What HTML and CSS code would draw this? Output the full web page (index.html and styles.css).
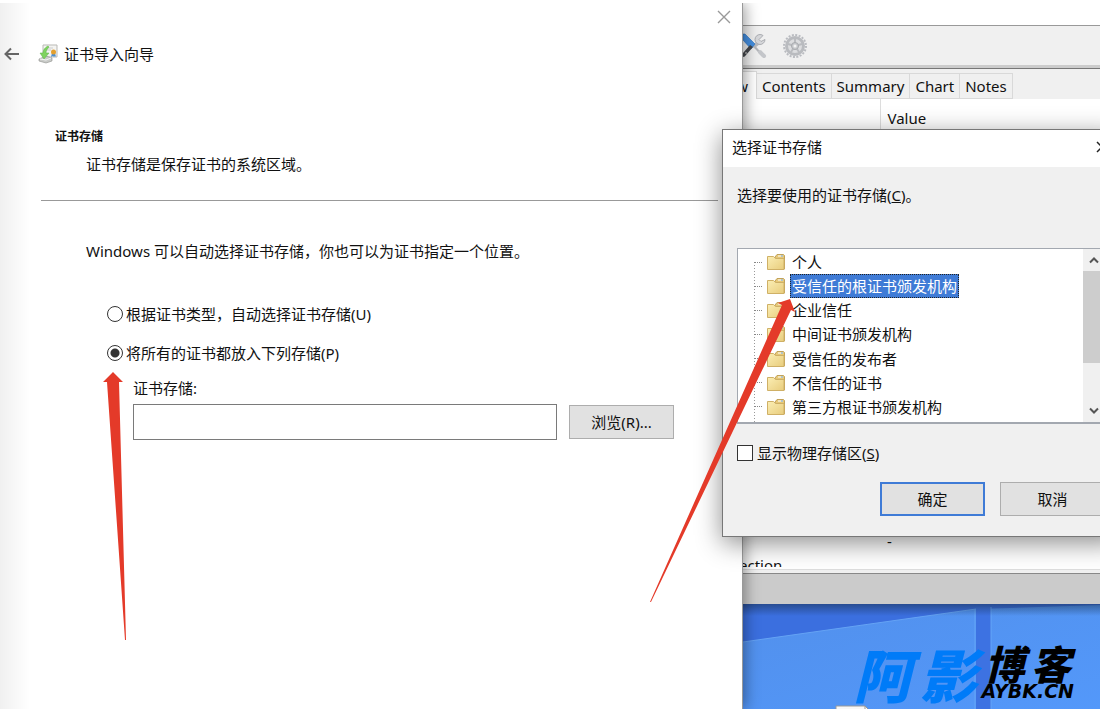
FILE: index.html
```
<!DOCTYPE html>
<html lang="zh-CN">
<head>
    <meta charset="UTF-8">
    <meta name="viewport" content="width=device-width, initial-scale=1.0">
    <title>证书导入向导</title>
    <link rel="stylesheet" href="styles.css">
</head>
<body>
    <main class="wizard">
        <button class="close" aria-label="关闭">
            <svg width="14" height="14" viewBox="0 0 14 14"><path d="M1 1l12 12M13 1L1 13" stroke="#999" stroke-width="1.4"/></svg>
        </button>
        <header class="wizard-title">
            <button class="back" aria-label="返回">
                <svg width="16" height="14" viewBox="0 0 16 14"><path d="M15 7H2M7 1.500L1.500 7L7 12.500" fill="none" stroke="#666" stroke-width="2"/></svg>
            </button>
            <svg width="20" height="20" viewBox="0 0 20 20">
                <path d="M5 1h14v12H5z" fill="#f4f4f2" stroke="#b9b9b5"/>
                <path d="M8 4h7M9 6h4" stroke="#ccc"/>
                <path d="M14 9l-1 4 2-1 1 1 1-1 1 1-1-4z" fill="#4b8ed0"/>
                <circle cx="15.500" cy="8" r="2.500" fill="#e4a02e"/>
                <path d="M1 15l7-3 6 2v3l-6 2-7-2z" fill="#c9cbc8" stroke="#8d8f8c" stroke-width=".6"/>
                <path d="M2 15l6 1 5-2" fill="none" stroke="#f5f5f5"/>
                <path d="M10 2C6 4 5 7 5 9L2 9l4 6 5-6H8c0-2 1-4 3-6z" fill="#7fd35f" stroke="#58b246" stroke-width=".5"/>
            </svg>
            <h1>证书导入向导</h1>
        </header>
        <section class="intro">
            <h2>证书存储</h2>
            <p>证书存储是保存证书的系统区域。</p>
        </section>
        <form class="options">
            <p>Windows 可以自动选择证书存储，你也可以为证书指定一个位置。</p>
            <label class="option"><input type="radio" name="store">根据证书类型，自动选择证书存储(U)</label>
            <label class="option"><input type="radio" name="store" checked>将所有的证书都放入下列存储(P)</label>
            <label class="store-label" for="store-name">证书存储:</label>
            <div class="store-row">
                <input type="text" id="store-name">
                <button type="button" class="btn">浏览(R)...</button>
            </div>
        </form>
    </main>

    <div class="desktop">
        <div class="app">
            <div class="app-title"></div>
            <div class="toolbar">
                <svg width="24" height="26" viewBox="0 0 24 26">
                    <path d="M10 12l10 11" stroke="#b4b6ba" stroke-width="2"/>
                    <path d="M17 19l4 4" stroke="#c4c6ca" stroke-width="4" stroke-linecap="round"/>
                    <path d="M10 14l5-4" stroke="#b9bbc0" stroke-width="4"/>
                    <path d="M20 2.500a5 5 0 1 0 2 4l-4 2-2-2z" fill="#d7d8db" stroke="#abadb2"/>
                    <path d="M0 1l2 0 10 10-4 5-8-9z" fill="#4590e2" stroke="#2c70bd" stroke-width=".6"/>
                    <path d="M10 14l-7 8q-1 2-3 2v-4l7-8z" fill="#45484d"/>
                    <circle cx="3" cy="20" r="1" fill="#aaa"/>
                </svg>
                <svg width="26" height="26" viewBox="0 0 26 26">
                    <circle cx="13" cy="13" r="11" fill="none" stroke="#b9bbc0" stroke-width="2" stroke-dasharray="2 1.450"/>
                    <circle cx="13" cy="13" r="8.500" fill="#dcdddf" stroke="#b9bbbf" stroke-width="3"/>
                    <path d="M13 13V6M13 13l7-2M13 13l4 6M13 13l-4 6M13 13l-7-2" stroke="#b9bbbf" stroke-width="2"/>
                    <circle cx="13" cy="13" r="3.500" fill="#c9cbce" stroke="#a7a9ad"/>
                    <circle cx="13" cy="13" r="1.500" fill="#f2f2f2"/>
                </svg>
            </div>
            <nav class="tabs">
                <button class="tab active">w</button>
                <button class="tab">Contents</button>
                <button class="tab">Summary</button>
                <button class="tab">Chart</button>
                <button class="tab">Notes</button>
            </nav>
            <div class="details">
                <table>
                    <thead><tr><th></th><th>Value</th></tr></thead>
                    <tbody>
                        <tr class="blank"><td></td><td></td></tr>
                        <tr><td></td><td>-</td></tr>
                        <tr><td>ection</td><td></td></tr>
                    </tbody>
                </table>
            </div>
            <div class="statusbar"></div>
        </div>
        <div class="wallpaper">
            <svg width="100%" height="100%" viewBox="0 0 357 105" preserveAspectRatio="xMinYMin slice">
                <defs>
                    <linearGradient id="sky" x1="0" y1="0" x2="1" y2="1">
                        <stop offset="0" stop-color="#5290ec"/>
                        <stop offset="1" stop-color="#5398fa"/>
                    </linearGradient>
                    <linearGradient id="shade" x1="0" y1="0" x2="0" y2="1">
                        <stop offset="0" stop-color="#123" stop-opacity=".45"/>
                        <stop offset="1" stop-color="#123" stop-opacity="0"/>
                    </linearGradient>
                </defs>
                <rect width="357" height="105" fill="url(#sky)"/>
                <path d="M0 0h357v1L233 5L0 38z" fill="#3b6fdf"/>
                <path d="M0 38L233 5" stroke="#65a3f4"/>
                <path d="M233 3h15v102h-15z" fill="#3d72e2"/>
                <path d="M232 5v100M248 3v102" stroke="#65a5f7"/>
                <rect width="357" height="12" fill="url(#shade)"/>
                <path d="M93 102h29l6 6H93z" fill="#f7f7f7" stroke="#999"/>
                <path d="M122 102v6" stroke="#999"/>
            </svg>
            <div class="logo">
                <div class="logo-main"><span>阿</span><span>影</span></div>
                <div class="logo-side">
                    <div class="logo-sub"><span>博</span><span>客</span></div>
                    <span class="logo-url">AYBK.CN</span>
                </div>
            </div>
        </div>
    </div>

    <div class="dialog" role="dialog" aria-labelledby="dialog-title">
        <header class="dialog-title">
            <h2 id="dialog-title">选择证书存储</h2>
            <button class="dialog-close" aria-label="关闭">
                <svg width="12" height="12" viewBox="0 0 12 12"><path d="M1 1l10 10M11 1L1 11" stroke="#222" stroke-width="1.500"/></svg>
            </button>
        </header>
        <div class="dialog-body">
            <p>选择要使用的证书存储(<u>C</u>)。</p>
            <div class="tree">
                <svg class="symbols" width="0" height="0">
                    <defs>
                        <linearGradient id="paper" x1="0" y1="0" x2="1" y2="1">
                            <stop offset="0" stop-color="#fbeeb4"/>
                            <stop offset="1" stop-color="#e8cc7c"/>
                        </linearGradient>
                    </defs>
                    <symbol id="folder" viewBox="0 0 18 16">
                        <path d="M8 3l2-2.500h6.500l1 1V15H8z" fill="#e6c878" stroke="#c2a258"/>
                        <path d="M11 2h5" stroke="#fff"/>
                        <path d="M14 2h2" stroke="#6fa5d8"/>
                        <path d="M.5 2.500h6l2 2h8.500v11H.5z" fill="url(#paper)" stroke="#cfb066"/>
                    </symbol>
                </svg>
                <ul>
                    <li><svg class="folder"><use href="#folder"/></svg><span>个人</span></li>
                    <li class="selected"><svg class="folder"><use href="#folder"/></svg><span>受信任的根证书颁发机构</span></li>
                    <li><svg class="folder"><use href="#folder"/></svg><span>企业信任</span></li>
                    <li><svg class="folder"><use href="#folder"/></svg><span>中间证书颁发机构</span></li>
                    <li><svg class="folder"><use href="#folder"/></svg><span>受信任的发布者</span></li>
                    <li><svg class="folder"><use href="#folder"/></svg><span>不信任的证书</span></li>
                    <li><svg class="folder"><use href="#folder"/></svg><span>第三方根证书颁发机构</span></li>
                </ul>
                <div class="scrollbar">
                    <button aria-label="向上"><svg width="10" height="8" viewBox="0 0 10 8"><path d="M1 6.500l4-4 4 4" fill="none" stroke="#555" stroke-width="2"/></svg></button>
                    <div class="thumb"></div>
                    <button aria-label="向下"><svg width="10" height="8" viewBox="0 0 10 8"><path d="M1 1.500l4 4 4-4" fill="none" stroke="#555" stroke-width="2"/></svg></button>
                </div>
            </div>
            <label class="physical"><input type="checkbox"><span>显示物理存储区(<u>S</u>)</span></label>
            <div class="actions">
                <button class="btn primary">确定</button>
                <button class="btn">取消</button>
            </div>
        </div>
    </div>

    <svg class="arrow arrow-left" width="30" height="270" viewBox="0 0 30 270">
        <path d="M12 0L22 10L18 10L25 268L24 268L6 10L2 10z" fill="#e43a29"/>
    </svg>
    <svg class="arrow arrow-right" width="150" height="304" viewBox="0 0 150 304">
        <path d="M140 0L145 13L141 11L1 303L0 303L132 6L128 4z" fill="#e43a29"/>
    </svg>
</body>
</html>
```
FILE: styles.css
```
* {
    box-sizing: border-box;
}

body {
    margin: 0;
    padding-top: 3px;
    height: 100vh;
    display: grid;
    grid-template-columns: minmax(0, 1fr) 357px;
    position: relative;
    overflow: hidden;
    background: #fff;
    color: #111;
    font-family: "Noto Sans", "Noto Sans CJK SC", sans-serif;
    font-size: 15px;
    line-height: 24px;
}

h1, h2, p, ul {
    margin: 0;
    padding: 0;
    font-size: 15px;
    font-weight: normal;
}

button, input {
    font: inherit;
    color: inherit;
    margin: 0;
}

button {
    padding: 0;
    border: none;
    background: none;
}

svg {
    display: block;
    flex: none;
}

.btn {
    width: 105px;
    height: 34px;
    background: #e1e1e1;
    border: 1px solid #adadad;
}

.btn.primary {
    border: 2px solid #3f7bd6;
}

/* wizard window */
.wizard {
    position: relative;
    z-index: 1;
    background: linear-gradient(to right, #f0f0f0, #fff 30px);
    border-right: 1px solid #999;
    box-shadow: 2px 0 14px rgba(0, 0, 0, 0.4);
    clip-path: inset(0 -20px 0 0);
    display: flex;
    flex-direction: column;
}

.close {
    align-self: flex-end;
    margin: 7px 11px 0 0;
}

.wizard-title {
    display: flex;
    align-items: center;
    gap: 6px;
    margin-top: 18px;
    padding-left: 4px;
}

.back {
    margin-right: 12px;
}

.intro {
    margin: 59px 24px 0 41px;
    padding: 0 0 24px 14px;
    border-bottom: 1px solid #999;
}

.intro h2 {
    font-size: 12px;
    font-weight: bold;
}

.intro p {
    margin: 3px 0 0 31px;
}

.options {
    display: flex;
    flex-direction: column;
    padding: 38px 68px 0 86px;
}

.options p {
    margin-bottom: 39px;
}

.option {
    display: flex;
    align-items: center;
    gap: 3px;
    margin: 0 0 15px 21px;
}

.option input {
    appearance: none;
    width: 16px;
    height: 16px;
    border: 1px solid #333;
    border-radius: 50%;
    background: #fff;
}

.option input:checked {
    background: radial-gradient(#333 4px, #fff 5px);
}

.store-label {
    margin: -4px 0 4px 47px;
}

.store-row {
    display: flex;
    align-items: center;
    gap: 12px;
    margin-left: 47px;
}

.store-row input {
    flex: 1;
    min-width: 0;
    height: 36px;
    border: 1px solid #7a7a7a;
    background: #fff;
}

/* right side of the desktop */
.desktop {
    display: grid;
    grid-template-rows: minmax(0, 1fr) 105px;
    min-width: 0;
}

.app {
    display: flex;
    flex-direction: column;
    min-height: 0;
    background: #f0f0f0;
}

.app-title {
    height: 23px;
    background: #fff;
    border-bottom: 1px solid #999;
}

.toolbar {
    display: flex;
    align-items: center;
    gap: 15px;
    height: 43px;
    padding-bottom: 2px;
    border-bottom: 1px solid #777;
    box-shadow: inset 0 -3px #ccc;
}

.tabs {
    display: flex;
    align-items: flex-end;
    height: 30px;
}

.tab {
    height: 26px;
    padding: 0 5px;
    border: 1px solid #d9d9d9;
    border-left: none;
}

.tab.active {
    width: 14px;
    height: 28px;
    padding: 0 8px 0 0;
    display: flex;
    justify-content: flex-end;
    align-items: center;
    overflow: hidden;
    background: #fff;
    border-bottom: none;
}

.details {
    flex: 1;
    min-height: 0;
    overflow: hidden;
    background: #fff;
    border-bottom: 2px solid #fff;
}

.details table {
    width: 100%;
    height: calc(100% + 10px);
    border-collapse: collapse;
    table-layout: fixed;
}

.details th, .details td {
    height: 24px;
    padding: 0 7px;
    text-align: left;
    font-weight: normal;
}

.details th {
    height: 38px;
}

.details th:first-child {
    width: 137px;
    border-right: 1px solid #ddd;
}

.details td:first-child {
    padding-left: 0;
    text-indent: -4px;
}

.details .blank td {
    height: auto;
}

.statusbar {
    height: 31px;
    margin-top: 4px;
    border-top: 1px solid #888;
    outline: 1px solid #ddd;
    outline-offset: 3px;
    background: #cbcbcb;
}

.wallpaper {
    position: relative;
    overflow: hidden;
}

.logo {
    position: absolute;
    right: 26px;
    bottom: 8px;
    display: flex;
    align-items: center;
    gap: 4px;
    font-family: "Noto Sans CJK SC", sans-serif;
    font-style: italic;
    font-weight: 900;
}

.logo-main {
    display: flex;
    gap: 8px;
    font-size: 58px;
    line-height: 56px;
    color: #007bf8;
}

.logo-side {
    display: flex;
    flex-direction: column;
    color: #000;
}

.logo-sub {
    display: flex;
    justify-content: space-around;
    font-size: 40px;
    line-height: 36px;
}

.logo-url {
    font-family: "DejaVu Sans", sans-serif;
    font-size: 19px;
    line-height: 20px;
}

/* certificate store dialog */
.dialog {
    position: absolute;
    z-index: 2;
    top: 129px;
    right: -20px;
    width: 398px;
    background: #f0f0f0;
    border: 1px solid #777;
    box-shadow: 0 6px 24px rgba(0, 0, 0, 0.45);
}

.dialog-title {
    display: flex;
    align-items: center;
    justify-content: space-between;
    height: 37px;
    padding: 0 11px 3px 9px;
    background: #fff;
}

.dialog-body {
    padding: 16px 14px 20px 14px;
}

.tree {
    display: flex;
    height: 176px;
    margin-top: 41px;
    border: 2px solid #a3a8b0;
    border-width: 1px 1px 2px 1px;
    background: #fff;
}

.symbols {
    position: absolute;
}

.tree ul {
    flex: 1;
    display: flex;
    flex-direction: column;
    justify-content: space-between;
    padding: 1px 0 3px 16px;
    list-style: none;
    background: repeating-linear-gradient(#999 0 1px, transparent 1px 3px) 16px 13px / 1px 100% no-repeat;
}

.tree li {
    display: flex;
    align-items: center;
    gap: 5px;
}

.tree li::before {
    content: "";
    width: 8px;
    border-top: 1px dotted #888;
}

.folder {
    width: 18px;
    height: 16px;
}

.tree span {
    padding: 0 1px;
    border: 1px dotted transparent;
    line-height: 22px;
}

.selected span {
    background: #3f7bd6;
    border-color: #222;
    color: #fff;
}

.scrollbar {
    display: flex;
    flex-direction: column;
    width: 21px;
    background: #f0f0f0;
}

.scrollbar button {
    height: 22px;
    display: flex;
    align-items: center;
    justify-content: center;
}

.thumb {
    height: 92px;
    margin-bottom: auto;
    background: #cdcdcd;
}

.physical {
    display: flex;
    align-items: center;
    gap: 4px;
    margin-top: 17px;
}

.physical input {
    appearance: none;
    width: 16px;
    height: 16px;
    border: 1px solid #333;
    background: #fff;
}

.actions {
    display: flex;
    justify-content: flex-end;
    gap: 15px;
    margin-top: 17px;
}

/* pointers over the windows */
.arrow {
    position: absolute;
    z-index: 3;
}

.arrow-left {
    left: 101px;
    top: 372px;
}

.arrow-right {
    right: 300px;
    top: 299px;
}
```
